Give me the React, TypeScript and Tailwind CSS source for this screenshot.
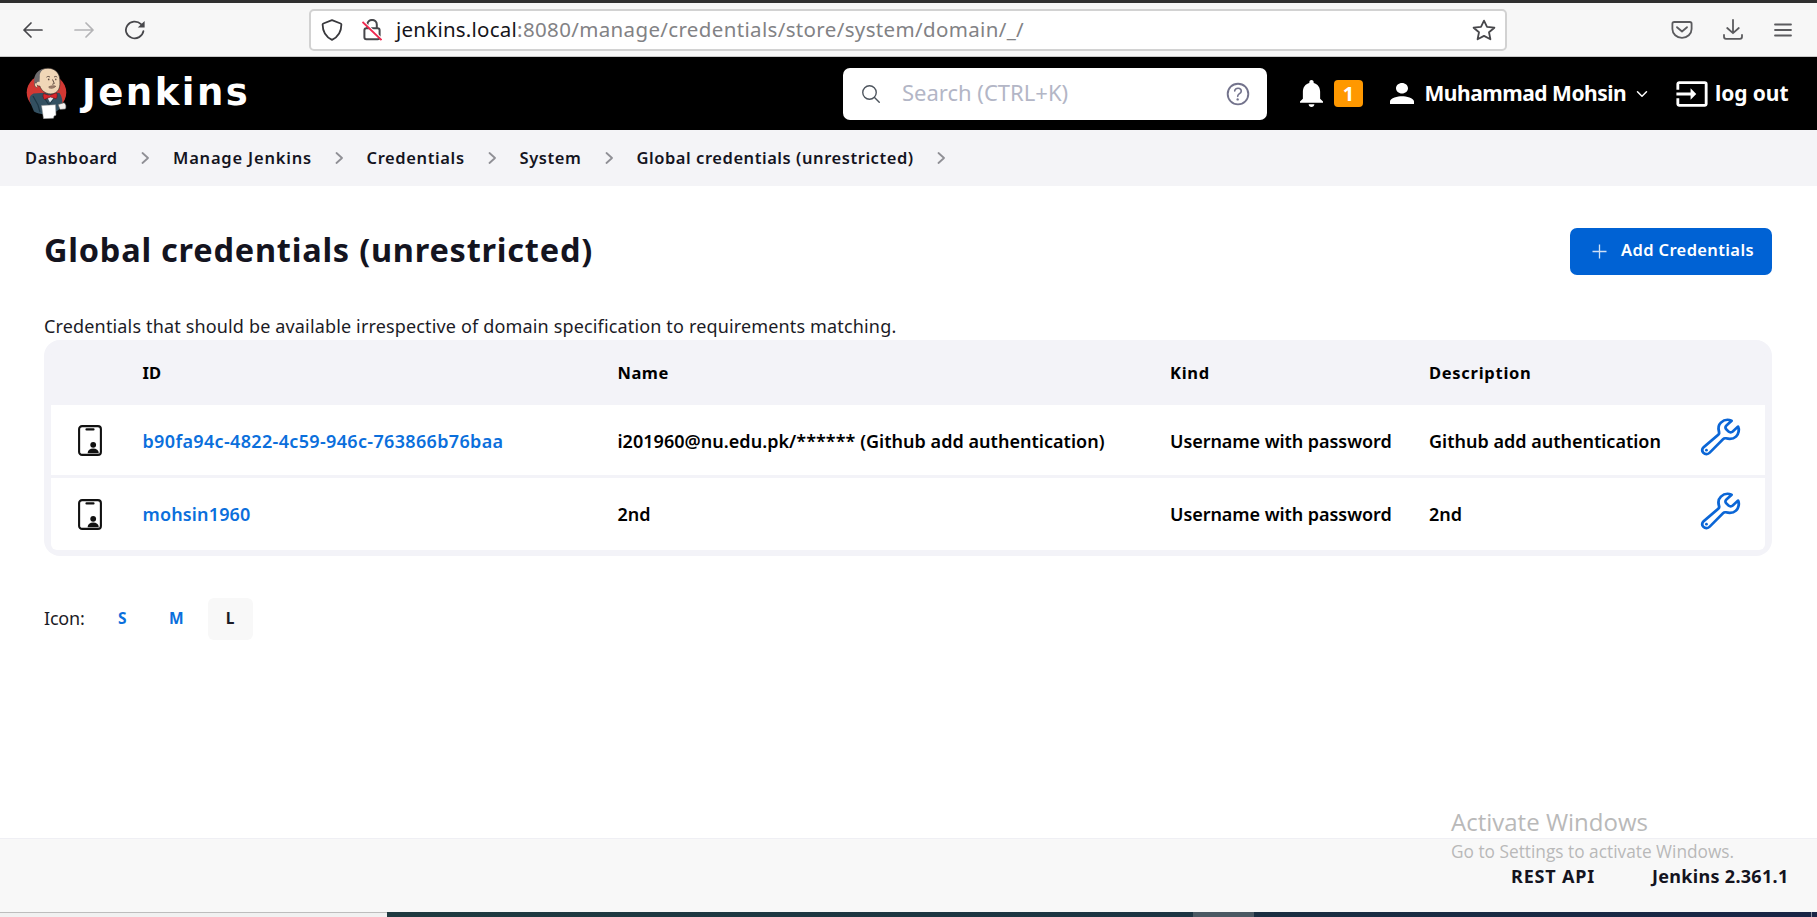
import React from 'react';
import {
  IoBuildOutline,
  IoChevronDownOutline,
  IoHelpCircleOutline,
  IoSearchOutline,
} from 'react-icons/io5';
import { MdInput } from 'react-icons/md';

function BackArrow() {
  return (
    <svg width="22" height="18" viewBox="0 0 22 18" fill="none" stroke="#47474b" strokeWidth="1.7" strokeLinecap="round" strokeLinejoin="round">
      <path d="M20 9H2M9 2L2 9l7 7" />
    </svg>
  );
}

function ForwardArrow() {
  return (
    <svg width="22" height="18" viewBox="0 0 22 18" fill="none" stroke="#b4b4b6" strokeWidth="1.7" strokeLinecap="round" strokeLinejoin="round">
      <path d="M2 9h18M13 2l7 7-7 7" />
    </svg>
  );
}

function Reload() {
  return (
    <svg width="22" height="20" viewBox="0 0 22 20" fill="none">
      <path d="M19.4 11.2A8.8 8.3 0 1 1 17 4.2" stroke="#47474b" strokeWidth="1.8" strokeLinecap="round" />
      <path d="M20.6 1v6.6h-6.8z" fill="#47474b" />
    </svg>
  );
}

function Shield() {
  return (
    <svg width="22" height="22" viewBox="0 0 22 22" fill="none" stroke="#38383c" strokeWidth="1.8" strokeLinejoin="round">
      <path d="M11 1.2l8.6 3.3c.5.2.8.6.8 1.1-.1 7-2.2 12-9.4 15.3C3.8 17.6 1.7 12.6 1.6 5.6c0-.5.3-.9.8-1.1z" />
    </svg>
  );
}

function InsecureLock() {
  return (
    <svg width="20" height="22" viewBox="0 0 20 22" fill="none">
      <path d="M5.4 9V5.6a4.7 4.7 0 0 1 9.4 0V9" stroke="#47474b" strokeWidth="2" />
      <rect x="2.4" y="9.3" width="15.2" height="11" rx="2" stroke="#47474b" strokeWidth="2" />
      <path d="M1.5 2.2L20 19.7" stroke="#fff" strokeWidth="1.4" />
      <path d="M.5 3l19 18" stroke="#f0284f" strokeWidth="1.9" />
    </svg>
  );
}

function Star() {
  return (
    <svg width="24" height="22" viewBox="0 0 24 22" fill="none" stroke="#47474b" strokeWidth="1.8" strokeLinejoin="round">
      <path d="M12 1.6l3 6.2 7.4.9-5.4 4.6 1.4 7L12 16.9l-6.4 3.4 1.4-7L1.6 8.7 9 7.8z" />
    </svg>
  );
}

function Pocket() {
  return (
    <svg width="22" height="18" viewBox="0 0 22 18" fill="none" stroke="#5b5b5e" strokeWidth="1.8" strokeLinecap="round" strokeLinejoin="round">
      <path d="M3.2 1h15.6c1 0 1.8.7 1.8 1.7V8a9.6 8.8 0 0 1-19.2 0V2.7C1.4 1.7 2.2 1 3.2 1z" />
      <path d="M6 6.2l5 4.3 5-4.3" />
    </svg>
  );
}

function Download() {
  return (
    <svg width="20" height="21" viewBox="0 0 20 21" fill="none" stroke="#5b5b5e" strokeWidth="1.8" strokeLinecap="round" strokeLinejoin="round">
      <path d="M10 1v13M4.2 9L10 14.2 15.8 9M1 16v1.8c0 1.1.9 2 2 2h14c1.1 0 2-.9 2-2V16" />
    </svg>
  );
}

function Menu() {
  return (
    <svg width="18" height="14" viewBox="0 0 18 14" stroke="#5b5b5e" strokeWidth="1.8" strokeLinecap="round">
      <path d="M1 1.5h16M1 7h16M1 12.5h16" />
    </svg>
  );
}

function CrumbChevron() {
  return (
    <svg width="9" height="12" viewBox="0 0 9 12" fill="none" stroke="#8f8f95" strokeWidth="1.8" strokeLinecap="round" strokeLinejoin="round">
      <path d="M1.5 1l5.500 5-5.500 5" />
    </svg>
  );
}

function Butler() {
  return (
    <svg width="42" height="52" viewBox="0 0 42 52">
      <ellipse cx="20.5" cy="25.5" rx="19.8" ry="18.5" fill="#d33833" />
      <path d="M7.5 26.5C4 28.5 3 30 4 35l4 9.5c4 2.5 9 3 13 2.500 5-.4 9-2 12-4.500l3-4c1-4.500 0-9-2.500-12.500-4-1-7-.5-11-.5z" fill="#335061" />
      <path d="M7 29l5 9 2 7M17 29l6 9 6-9" fill="none" stroke="#1d3644" strokeWidth="1.2" />
      <path d="M20 28l4 7.5L30 28z" fill="#dfe7ee" />
      <path d="M10 14.5C9 7 14 1.3 22 1.200c7 0 11.500 5 11.800 11 .2 4 .4 7-1 10-1.500 3-4.500 5-8.500 4.700-5-.2-9-3.400-10.500-7.900-2.400.5-4-1.800-3.800-4.500z" fill="#f0d6b7" stroke="#3b3331" strokeWidth=".7" />
      <path d="M8.8 18.5C6.6 10 10 3 18 1.700c-2.500 2-4.500 4-4.200 7.800l-.3 5.500c-2.500-1-3.500 1-2.500 4.500z" fill="#6d6b6d" />
      <path d="M10.5 15.5c-3 0-2.500 5 .8 5.200" fill="#f0d6b7" stroke="#3b3331" strokeWidth=".6" />
      <path d="M20.5 10.2c1-1 2.500-1 3.500 0M28 10.200c1-1 2.300-1 3.200 0M26.500 12.500l1.800 4-2 .8" fill="none" stroke="#5c4940" strokeWidth="1" />
      <ellipse cx="22.7" cy="12.4" rx=".8" ry=".9" fill="#5c4940" />
      <ellipse cx="29.8" cy="12.4" rx=".7" ry=".9" fill="#5c4940" />
      <path d="M22.5 20c2.500-1.300 5-1.500 7.300-.7-1.800 1.900-4.300 2.500-6.800 1.500" fill="#a58471" stroke="#6b5447" strokeWidth=".7" />
      <path d="M17.5 26.5l6 2 7-2.700c1 2 1 4.500-.5 6l-5.500-1.800-6 2.500c-1.500-1.500-1.800-4-1-6z" fill="#d8262c" stroke="#6b1114" strokeWidth=".6" />
      <path d="M32 37.5l6-1.800c2 1 2.500 4 1.500 6.300l-5.500.5z" fill="#f4f1ee" stroke="#555" strokeWidth=".6" />
      <path d="M15.5 38.5l14-.8.5 10.500-2 .8-.5 2.200-10 .6z" fill="#fff" stroke="#8c8c8c" strokeWidth=".5" />
    </svg>
  );
}

function Bell() {
  return (
    <svg className="h-[27px] w-[23px]" viewBox="4 2.5 16 19.5" preserveAspectRatio="none" fill="#fff">
      <path d="M12 22c1.100 0 2-.9 2-2h-4c0 1.100.89 2 2 2zm6-6v-5c0-3.070-1.640-5.640-4.500-6.320V4c0-.83-.67-1.500-1.500-1.500s-1.500.67-1.500 1.500v.68C7.630 5.360 6 7.920 6 11v5l-2 2v1h16v-1l-2-2z" />
    </svg>
  );
}

function Person() {
  return (
    <svg className="h-[21px] w-6" viewBox="4 4 16 16" preserveAspectRatio="none" fill="#fff">
      <path d="M12 12c2.210 0 4-1.790 4-4s-1.790-4-4-4-4 1.790-4 4 1.790 4 4 4zm0 2c-2.670 0-8 1.340-8 4v2h16v-2c0-2.660-5.330-4-8-4z" />
    </svg>
  );
}

function CredentialIcon() {
  return (
    <svg width="24" height="31" viewBox="0 0 24 31" fill="none">
      <rect x="1.1" y="1.1" width="21.8" height="28.8" rx="3" stroke="#111" strokeWidth="2.1" />
      <path d="M8.5 4.4h7" stroke="#111" strokeWidth="2.2" strokeLinecap="round" />
      <ellipse cx="15.2" cy="19.8" rx="2.9" ry="2.9" fill="#111" />
      <path d="M9.6 28.2c.2-3.200 2.400-4.700 5.600-4.700s5.400 1.500 5.600 4.700z" fill="#111" />
    </svg>
  );
}

const crumbs = [
  { label: 'Dashboard', cls: 'w-[120px] tracking-[0.55px]' },
  { label: 'Manage Jenkins', cls: 'w-[165.5px] tracking-[0.8px]' },
  { label: 'Credentials', cls: 'w-[125px] tracking-[0.62px]' },
  { label: 'System', cls: 'w-[89px] tracking-[0.6px]' },
  { label: 'Global credentials (unrestricted)', cls: 'w-[304.5px] tracking-[0.55px]' },
];

const rows = [
  {
    id: 'b90fa94c-4822-4c59-946c-763866b76baa',
    idCls: 'tracking-[0.34px]',
    name: 'i201960@nu.edu.pk/****** (Github add authentication)',
    description: 'Github add authentication',
    cls: 'h-[70px] pt-px',
  },
  { id: 'mohsin1960', idCls: 'tracking-[0.15px]', name: '2nd', description: '2nd', cls: 'mt-[3px] h-[72px] rounded-b-md' },
];

const columns = 'grid grid-cols-[91.5px_475px_552.5px_259px_269px_1fr] items-center';

export default function App() {
  return (
    <div className="flex h-[917px] w-[1817px] flex-col overflow-hidden bg-white font-['Noto_Sans',sans-serif] whitespace-nowrap text-[#14141f]">
      <div className="flex h-[57px] shrink-0 items-center border-t-[3px] border-b border-t-[#303030] border-b-[#c9c9c9] bg-[#f7f7f7]">
        <div className="flex w-[309px] items-center gap-[29px] pl-[22px]">
          <BackArrow />
          <ForwardArrow />
          <Reload />
        </div>
        <div className="flex h-[42px] w-[1198px] items-center rounded-[5px] border-2 border-[#d2d2d2] bg-white pr-[9px] pl-[10px]">
          <Shield />
          <div className="w-[18.5px]" />
          <InsecureLock />
          <span className="ml-[14.5px] text-[20.5px] leading-none">
            <span className="tracking-[0.23px] text-[#15141a]">jenkins.local</span>
            <span className="tracking-[0.35px] text-[#828285]">:8080/manage/credentials/store/system/domain/_/</span>
          </span>
          <div className="ml-auto">
            <Star />
          </div>
        </div>
        <div className="ml-auto flex items-center gap-[30.5px] pr-[25.5px]">
          <Pocket />
          <Download />
          <Menu />
        </div>
      </div>

      <header className="flex h-[73px] shrink-0 items-center bg-black text-white">
        <div className="flex w-[843px] items-center pb-px pl-[25.5px]">
          <Butler />
          <span className="mb-[2px] ml-[14.5px] font-['DejaVu_Sans',sans-serif] text-[37px] leading-none font-bold tracking-[2.5px]">Jenkins</span>
        </div>
        <div className="flex h-[52px] w-[424px] items-center rounded-[7px] bg-white pr-[14px] pl-[17px]">
          <IoSearchOutline className="size-[22px] text-[#4d545d]" />
          <span className="mb-[3px] ml-5 text-[22px] leading-none text-[#b3b6c6]">Search (CTRL+K)</span>
          <IoHelpCircleOutline className="ml-auto size-[30px] text-[#73738c]" />
        </div>
        <div className="ml-[33px] flex items-center">
          <Bell />
          <span className="ml-[11px] flex h-[27px] w-[29px] items-center justify-center rounded-[4px] bg-[#ff9800] text-[20px] leading-none font-bold">1</span>
        </div>
        <div className="ml-[27px] flex items-center">
          <Person />
          <span className="ml-[10.5px] w-[204.5px] text-[21px] leading-none font-bold tracking-[-0.48px]">Muhammad Mohsin</span>
          <IoChevronDownOutline className="ml-[5px] size-4" />
        </div>
        <div className="ml-[24.5px] flex items-center">
          <MdInput className="size-[34px]" />
          <span className="ml-[6.5px] text-[21px] leading-none font-bold tracking-[-0.08px]">log out</span>
        </div>
      </header>

      <nav className="flex h-14 shrink-0 items-center bg-[#f4f4f7] pl-[25px] text-[16.5px] leading-none font-semibold">
        {crumbs.map((c) => (
          <div key={c.label} className="flex items-center">
            <span className={`mr-[-4px] shrink-0 ${c.cls}`}>{c.label}</span>
            <span className="flex w-8 justify-start">
              <CrumbChevron />
            </span>
          </div>
        ))}
      </nav>

      <main className="flex grow flex-col pr-[45px] pl-[44px]">
        <div className="mt-[41px] flex h-[48px] items-center justify-between">
          <h1 className="mb-px text-[32.5px] leading-none font-bold tracking-[0.77px]">Global credentials (unrestricted)</h1>
          <button className="flex h-[47px] w-[202px] items-center rounded-[7px] bg-[#0062d4] pb-[2px] pl-[22px] text-[16.5px] leading-none font-semibold text-white">
            <svg className="mt-[2px]" width="15" height="15" viewBox="0 0 15 15" stroke="#cfe0f6" strokeWidth="1.3">
              <path d="M7.5 .5v14M.5 7.5h14" />
            </svg>
            <span className="ml-[14px] tracking-[0.37px]">Add Credentials</span>
          </button>
        </div>
        <p className="mt-[38px] h-[27px] text-[18px] leading-[26px] tracking-[0.155px] text-[#1b1b26]">
          Credentials that should be available irrespective of domain specification to requirements matching.
        </p>
        <div className="h-[216px] rounded-2xl border-x-[7px] border-b-[7px] border-[#f3f3f8] bg-[#f3f3f8] text-black">
          <div className={`${columns} h-[65px] pt-px text-[16.5px] leading-none font-bold`}>
            <span />
            <span>ID</span>
            <span className="tracking-[0.5px]">Name</span>
            <span className="tracking-[0.7px]">Kind</span>
            <span className="tracking-[0.72px]">Description</span>
          </div>
          {rows.map((r) => (
            <div key={r.id} className={`${columns} ${r.cls} bg-white text-[18px] leading-none font-semibold`}>
              <span className="pl-[27px]">
                <CredentialIcon />
              </span>
              <a className={`text-[#0b6fdc] ${r.idCls}`}>{r.id}</a>
              <span className="tracking-[0.03px]">{r.name}</span>
              <span className="tracking-[-0.06px]">Username with password</span>
              <span className="tracking-[0px]">{r.description}</span>
              <IoBuildOutline preserveAspectRatio="none" className="mb-[7px] h-[42px] w-[45px] text-[#0b66d6]" />
            </div>
          ))}
        </div>
        <div className="mt-[42px] flex h-[42px] items-center text-[15.5px] leading-none font-bold text-[#0b6fdc]">
          <span className="mb-[2px] w-[74px] text-[18px] font-normal tracking-[-0.2px] text-[#1b1b26]">Icon:</span>
          <span className="w-[51px]">S</span>
          <span className="w-[38.5px]">M</span>
          <span className="flex h-[42px] w-[45px] items-center justify-center rounded-md bg-[#f8f8f8] text-[#1b1b26]">L</span>
        </div>
      </main>

      <footer className="flex h-[74px] shrink-0 items-center justify-end border-t border-[#efeff4] bg-[#f8f8f8] pr-[28.5px] text-[18px] leading-none font-bold">
        <span className="tracking-[0.8px]">REST API</span>
        <span className="ml-[57px] tracking-[0.3px]">Jenkins 2.361.1</span>
      </footer>

      <div className="flex h-[5px] shrink-0">
        <div className="w-[387px] border-t border-[#bdbdbd] bg-[#f1f1f1]" />
        <div className="w-[806px] bg-linear-to-r from-[#1f3a40] to-[#1c3442]" />
        <div className="w-[61px] bg-[#4b5963]" />
        <div className="w-[557px] bg-linear-to-r from-[#1a2e41] to-[#192546]" />
        <div className="w-px bg-[#8b909c]" />
        <div className="grow bg-[#192546]" />
      </div>

      <div className="pointer-events-none absolute top-[804px] left-[1451px] font-['Open_Sans',sans-serif] text-[#b9b9b9]">
        <div className="text-2xl leading-[35px]">Activate Windows</div>
        <div className="text-[17.3px] leading-[26px]">Go to Settings to activate Windows.</div>
      </div>
    </div>
  );
}
